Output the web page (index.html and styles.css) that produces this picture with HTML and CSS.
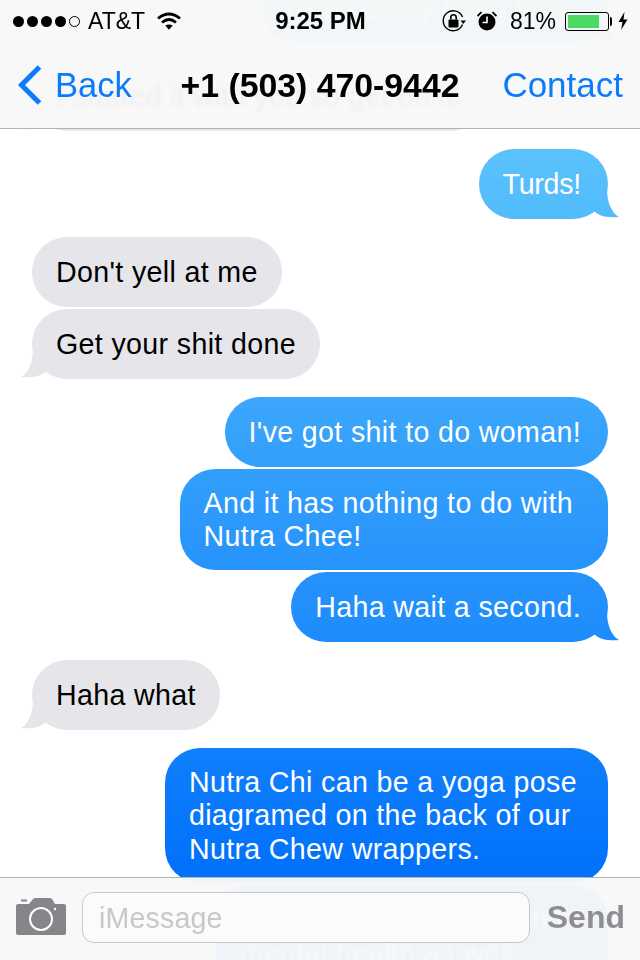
FILE: index.html
```html
<!DOCTYPE html>
<html lang="en">
<head>
    <meta charset="UTF-8">
    <meta name="viewport" content="width=device-width, initial-scale=1.0">
    <title>Messages</title>
    <link rel="stylesheet" href="styles.css">
</head>
<body>
    <main class="chat">
        <div class="bubble sent tail ghost-top">I'll do every thing now</div>
        <div class="bubble received tail group-end">I shared it with you so get on it.</div>
        <div class="bubble sent tail group-end tight">Turds!</div>
        <div class="bubble received">Don't yell at me</div>
        <div class="bubble received tail group-end">Get your shit done</div>
        <div class="bubble sent">I've got shit to do woman!</div>
        <div class="bubble sent multi wide">And it has nothing to do with<br>Nutra Chee!</div>
        <div class="bubble sent tail group-end">Haha wait a second.</div>
        <div class="bubble received tail group-end">Haha what</div>
        <div class="bubble sent multi">Nutra Chi can be a yoga pose<br>diagramed on the back of our<br>Nutra Chew wrappers.</div>
        <div class="bubble sent multi ghost-bottom">It's good for physical and<br>mental health as well.</div>
    </main>

    <header class="top-bar">
        <div class="status">
            <div class="status-left">
                <span class="signal">
                    <i class="dot"></i><i class="dot"></i><i class="dot"></i><i class="dot"></i><i class="dot empty"></i>
                </span>
                <span>AT&amp;T</span>
                <svg class="wifi" viewBox="0 0 24 18" width="24" height="18">
                    <path d="M1 6.5Q12 -2.5 23 6.5" fill="none" stroke="#000" stroke-width="2.8"/>
                    <path d="M5 10.5Q12 4.5 19 10.5" fill="none" stroke="#000" stroke-width="2.8"/>
                    <path d="M8.3 13.6Q12 11.2 15.7 13.6L12 17.8Z" fill="#000"/>
                </svg>
            </div>
            <div class="time">9:25 PM</div>
            <div class="status-right">
                <svg class="lock" viewBox="0 0 24 24" width="24" height="24">
                    <path d="M20.5 15.5A10 10 0 1 1 20.5 8" fill="none" stroke="#000" stroke-width="1.4"/>
                    <path d="M18.5 11.5H24L21.2 15Z" fill="#000"/>
                    <rect x="6.5" y="10.5" width="10" height="8" rx="1" fill="#000"/>
                    <path d="M8.8 10.5V8.5A2.7 2.7 0 0 1 14.2 8.5V10.5" fill="none" stroke="#000" stroke-width="1.6"/>
                </svg>
                <svg class="alarm" viewBox="0 0 20 20" width="20" height="20">
                    <circle cx="10" cy="11" r="8.5" fill="#000"/>
                    <path d="M10 5.5V11.5H5.5" fill="none" stroke="#fff" stroke-width="1.6"/>
                    <path d="M0.5 5L4.5 1.2M19.5 5L15.5 1.2" stroke="#000" stroke-width="1.8"/>
                </svg>
                <span class="percent">81%</span>
                <div class="battery"><div class="level"></div></div>
                <svg class="bolt" viewBox="0 0 10 18" width="10" height="18">
                    <path d="M6.5 0L0.5 10H4.5L3 18L9.5 7.5H5.5Z" fill="#000"/>
                </svg>
            </div>
        </div>
        <nav class="nav">
            <a class="back">
                <svg viewBox="0 0 26 42" width="26" height="42">
                    <path d="M22.5 3L4.5 21L22.5 39" fill="none" stroke="#0b7bfb" stroke-width="5"/>
                </svg>
                Back
            </a>
            <div class="title">+1 (503) 470-9442</div>
            <a class="contact">Contact</a>
        </nav>
    </header>

    <footer class="compose">
        <svg class="camera" viewBox="0 0 50 37" width="50" height="37">
            <path d="M2 6H13L17 1Q18 0 20 0H33Q35 0 36 1L39 6H48Q50 6 50 8V35Q50 37 48 37H2Q0 37 0 35V8Q0 6 2 6Z" fill="#85858a"/>
            <rect x="5" y="1.5" width="6" height="2" fill="#85858a"/>
            <circle cx="25" cy="21" r="11" fill="none" stroke="#fff" stroke-width="2"/>
            <circle cx="39" cy="11" r="1.2" fill="#fff"/>
        </svg>
        <div class="field">iMessage</div>
        <div class="send">Send</div>
    </footer>
</body>
</html>
```

FILE: styles.css
```css
body {
    font-family: "Liberation Sans", Arial, sans-serif;
    margin: 0;
    width: 640px;
    height: 960px;
    overflow: hidden;
    position: relative;
    background-color: white;
    color: black;
}

/* messages */
.chat {
    display: flex;
    flex-direction: column;
    gap: 2px;
    padding: 0 32px;
    margin-top: -27px;
}

.bubble {
    position: relative;
    padding: 19px 27px 18px 24px;
    border-radius: 35px;
    font-size: 28.6px;
    letter-spacing: 0.35px;
    line-height: 33px;
    white-space: nowrap;
}

.bubble.multi {
    padding: 17.5px 31px 16.5px 24px;
    line-height: 33.5px;
}

.bubble.wide {
    padding-right: 35px;
}

.bubble.tight {
    letter-spacing: -0.25px;
}

.group-end {
    margin-bottom: 16px;
}

.sent {
    align-self: flex-end;
    color: white;
    background: linear-gradient(#5cc4fb 14%, #0272fc 90%) fixed;
}

.received {
    align-self: flex-start;
    background-color: #e5e5ea;
    padding-right: 24px;
}

.tail::after {
    content: "";
    position: absolute;
    bottom: 0;
    width: 30px;
    height: 30px;
}

.sent.tail::after {
    right: -12px;
    background: inherit;
    background-attachment: fixed;
    clip-path: path("M0 0L17 0C17 14 22 24 29 28C21 29 11 28 5 23L0 20Z");
}

.received.tail::after {
    left: -12px;
    background-color: #e5e5ea;
    clip-path: path("M30 0L13 0C13 14 8 24 1 28C9 29 19 28 25 23L30 20Z");
}

.ghost-top {
    margin-bottom: 16px;
    padding-right: 0;
    width: 346px;
    box-sizing: border-box;
}

.bubble.ghost-bottom {
    width: 393px;
    box-sizing: border-box;
}

/* top bar */
.top-bar {
    position: absolute;
    top: 0;
    left: 0;
    right: 0;
    height: 128px;
    background: rgba(248, 248, 248, 0.97);
    backdrop-filter: blur(1.5px);
    border-bottom: 1px solid #b2b2b2;
}

.status {
    display: grid;
    grid-template-columns: 1fr auto 1fr;
    align-items: center;
    height: 42px;
    padding: 0 12px 0 13px;
    font-size: 23px;
}

.status-left,
.status-right {
    display: flex;
    align-items: center;
}

.status-right {
    justify-content: flex-end;
}

.signal {
    display: flex;
    gap: 3px;
    margin-right: 8px;
}

.dot {
    width: 11px;
    height: 11px;
    border-radius: 50%;
    background: black;
    box-sizing: border-box;
}

.dot.empty {
    background: none;
    border: 1px solid black;
}

.wifi {
    margin-left: 12px;
}

.time {
    font-size: 24px;
    font-weight: bold;
}

.alarm {
    margin-left: 11px;
}

.percent {
    margin-left: 13px;
}

.battery {
    position: relative;
    width: 44px;
    height: 19px;
    margin-left: 9px;
    padding: 2px;
    box-sizing: border-box;
    border: 1px solid black;
    border-radius: 3px;
}

.battery::after {
    content: "";
    position: absolute;
    right: -4px;
    top: 4px;
    width: 2px;
    height: 9px;
    background: black;
    border-radius: 0 3px 3px 0;
}

.level {
    width: 81%;
    height: 100%;
    background: #4cd964;
}

.bolt {
    margin-left: 9px;
}

.nav {
    display: grid;
    grid-template-columns: 1fr auto 1fr;
    align-items: center;
    height: 86px;
    padding: 0 17px;
}

.back,
.contact {
    font-size: 35px;
    color: #0b7bfb;
}

.back {
    display: flex;
    align-items: center;
    gap: 12px;
    font-size: 34.5px;
}

.contact {
    justify-self: end;
}

.title {
    font-size: 33.8px;
    font-weight: bold;
}

/* compose bar */
.compose {
    position: absolute;
    left: 0;
    right: 0;
    bottom: 0;
    height: 83px;
    display: flex;
    align-items: flex-start;
    box-sizing: border-box;
    padding: 14px 15px 0 16px;
    background: rgba(248, 248, 248, 0.97);
    backdrop-filter: blur(1.5px);
    border-top: 1px solid #b2b2b2;
}

.camera {
    margin-top: 6px;
}

.field {
    flex: 1;
    height: 51px;
    margin-left: 16px;
    padding-left: 16px;
    box-sizing: border-box;
    border: 1px solid #c8c8cc;
    border-radius: 12px;
    background: rgba(252, 252, 252, 0.9);
    font-size: 28.6px;
    letter-spacing: 0.15px;
    line-height: 51px;
    color: #c7c7cc;
}

.send {
    margin-left: 17px;
    font-size: 32px;
    font-weight: bold;
    line-height: 51px;
    color: #8e8e93;
}
```
